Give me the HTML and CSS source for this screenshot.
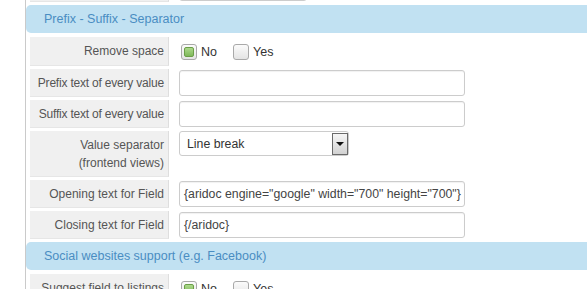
FILE: index.html
```html
<!DOCTYPE html>
<html>
<head>
<meta charset="utf-8">
<link rel="stylesheet" href="styles.css">
</head>
<body>
<div class="page">
  <div class="row row-top">
    <div class="label"></div>
    <div class="value">
      <div class="select select-top"><span class="sel-text"></span><span class="sel-btn"><i class="tri"></i></span></div>
    </div>
  </div>

  <div class="section">Prefix - Suffix - Separator</div>

  <div class="row">
    <div class="label">Remove space</div>
    <div class="value">
      <div class="choices">
        <span class="box checked"><i></i></span><span class="opt">No</span>
        <span class="box"></span><span class="opt">Yes</span>
      </div>
    </div>
  </div>

  <div class="row">
    <div class="label tight">Prefix text of every value</div>
    <div class="value"><div class="input"></div></div>
  </div>

  <div class="row">
    <div class="label tight">Suffix text of every value</div>
    <div class="value"><div class="input"></div></div>
  </div>

  <div class="row">
    <div class="label">Value separator<br>(frontend views)</div>
    <div class="value">
      <div class="select"><span class="sel-text">Line break</span><span class="sel-btn"><i class="tri"></i></span></div>
    </div>
  </div>

  <div class="row">
    <div class="label">Opening text for Field</div>
    <div class="value"><div class="input">{aridoc engine="google" width="700" height="700"}</div></div>
  </div>

  <div class="row">
    <div class="label">Closing text for Field</div>
    <div class="value"><div class="input">{/aridoc}</div></div>
  </div>

  <div class="section">Social websites support (e.g. Facebook)</div>

  <div class="row">
    <div class="label">Suggest field to listings</div>
    <div class="value">
      <div class="choices">
        <span class="box checked"><i></i></span><span class="opt">No</span>
        <span class="box"></span><span class="opt">Yes</span>
      </div>
    </div>
  </div>
</div>
</body>
</html>
```

FILE: styles.css
```css
html, body {
  margin: 0;
  padding: 0;
  background: #ffffff;
  overflow: hidden;
}

body {
  font-family: "Liberation Sans", Arial, sans-serif;
  font-size: 12px;
  color: #555555;
}

.page {
  margin-left: 25px;
  margin-top: -26px;
  border-left: 1px solid #cacaca;
  min-height: 340px;
  display: flex;
  flex-direction: column;
  gap: 3px;
}

.section {
  height: 28px;
  line-height: 28px;
  background: #c1e1f2;
  color: #4a8dc2;
  font-size: 12.5px;
  padding-left: 18px;
  border-radius: 5px 0 0 5px;
  margin-bottom: 1px;
}

.row {
  display: flex;
  padding-left: 4px;
}

.label {
  width: 134px;
  flex: none;
  background: #f0f0f0;
  border-right: 1px solid #dedede;
  border-bottom: 1px solid #e6e6e6;
  padding: 5px 4px 4px 0;
  line-height: 18px;
  text-align: right;
  color: #555555;
  min-height: 18px;
}

.label.tight {
  letter-spacing: -0.2px;
}

.value {
  padding-left: 10px;
  display: flex;
  align-items: flex-start;
}

.input {
  width: 276px;
  height: 24px;
  line-height: 24px;
  border: 1px solid #cccccc;
  border-radius: 3px;
  box-shadow: inset 0 1px 1px rgba(0, 0, 0, 0.06);
  padding: 0 4px;
  color: #444444;
  font-size: 12.3px;
  white-space: nowrap;
  overflow: hidden;
  margin-top: 1px;
}

.select {
  width: 168px;
  height: 23px;
  border: 1px solid #cccccc;
  border-radius: 3px;
  display: flex;
  align-items: center;
  color: #333333;
  font-size: 12.3px;
}

.sel-text {
  flex: 1;
  padding-left: 7px;
}

.sel-btn {
  width: 14px;
  height: 20px;
  border: 1px solid #6a6a6a;
  background: linear-gradient(#f6f6f6, #d2d2d2);
  display: flex;
  align-items: center;
  justify-content: center;
}

.tri {
  width: 0;
  height: 0;
  border-left: 4px solid transparent;
  border-right: 4px solid transparent;
  border-top: 4px solid #111111;
}

.select-top {
  width: 126px;
  margin-top: 2px;
}

.choices {
  height: 28px;
  padding-top: 1px;
  display: flex;
  align-items: center;
  padding-left: 2px;
}

.box {
  width: 14px;
  height: 14px;
  border: 1px solid #a9a9a9;
  border-radius: 3px;
  background: linear-gradient(#fbfbfb, #e4e4e4);
  display: flex;
  align-items: center;
  justify-content: center;
}

.box.checked i {
  display: block;
  width: 8px;
  height: 8px;
  border: 1px solid #6b9e48;
  border-radius: 2px;
  background: linear-gradient(#acd98b, #7fb85a);
}

.opt {
  color: #333333;
  font-size: 12.5px;
  margin-left: 4px;
  margin-right: 16px;
}
```
